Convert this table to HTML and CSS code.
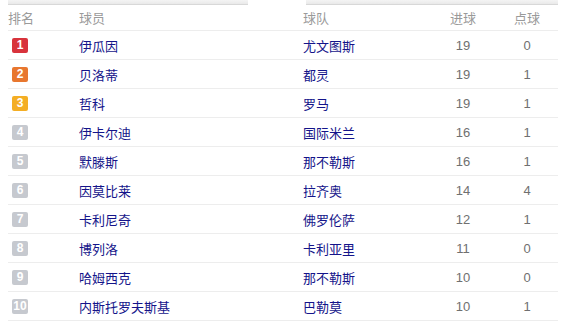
FILE: index.html
```html
<!DOCTYPE html>
<html lang="zh">
<head>
<meta charset="utf-8">
<link rel="stylesheet" href="styles.css">
</head>
<body>
<div class="tabs">
  <div class="tab tab-left"></div>
  <div class="tab tab-right"></div>
</div>
<table class="rank">
  <colgroup>
    <col class="c-rank"><col class="c-player"><col class="c-team"><col class="c-goal"><col class="c-pen">
  </colgroup>
  <thead>
    <tr><th>排名</th><th>球员</th><th>球队</th><th class="num">进球</th><th class="num">点球</th></tr>
  </thead>
  <tbody>
    <tr><td><span class="badge b1">1</span></td><td class="name">伊瓜因</td><td class="name">尤文图斯</td><td class="num">19</td><td class="num">0</td></tr>
    <tr><td><span class="badge b2">2</span></td><td class="name">贝洛蒂</td><td class="name">都灵</td><td class="num">19</td><td class="num">1</td></tr>
    <tr><td><span class="badge b3">3</span></td><td class="name">哲科</td><td class="name">罗马</td><td class="num">19</td><td class="num">1</td></tr>
    <tr><td><span class="badge">4</span></td><td class="name">伊卡尔迪</td><td class="name">国际米兰</td><td class="num">16</td><td class="num">1</td></tr>
    <tr><td><span class="badge">5</span></td><td class="name">默滕斯</td><td class="name">那不勒斯</td><td class="num">16</td><td class="num">1</td></tr>
    <tr><td><span class="badge">6</span></td><td class="name">因莫比莱</td><td class="name">拉齐奥</td><td class="num">14</td><td class="num">4</td></tr>
    <tr><td><span class="badge">7</span></td><td class="name">卡利尼奇</td><td class="name">佛罗伦萨</td><td class="num">12</td><td class="num">1</td></tr>
    <tr><td><span class="badge">8</span></td><td class="name">博列洛</td><td class="name">卡利亚里</td><td class="num">11</td><td class="num">0</td></tr>
    <tr><td><span class="badge">9</span></td><td class="name">哈姆西克</td><td class="name">那不勒斯</td><td class="num">10</td><td class="num">0</td></tr>
    <tr><td><span class="badge">10</span></td><td class="name">内斯托罗夫斯基</td><td class="name">巴勒莫</td><td class="num">10</td><td class="num">1</td></tr>
  </tbody>
</table>
</body>
</html>
```
FILE: styles.css
```css
html, body {
  margin: 0;
  padding: 0;
  background: #fff;
}
body {
  padding: 0 18px 0 8px;
  font-family: "Noto Sans CJK SC", "Liberation Sans", sans-serif;
  font-size: 13px;
}
.tabs {
  display: flex;
  justify-content: space-between;
  width: 550px;
}
.tab {
  height: 4px;
  background: linear-gradient(#f4f4f4, #e9e9e9);
  border-bottom: 1px solid #d8d8d8;
}
.tab-left { width: 240px; }
.tab-right { width: 252px; }
.rank {
  width: 550px;
  border-collapse: collapse;
  table-layout: fixed;
}
.c-rank { width: 71px; }
.c-player { width: 224px; }
.c-team { width: 127px; }
.c-goal { width: 66px; }
.c-pen { width: 62px; }
.rank th {
  height: 25px;
  padding: 0;
  text-align: left;
  font-weight: normal;
  color: #9a9a9a;
  border-bottom: 1px solid #ededed;
  line-height: 1;
}
.rank td {
  height: 28px;
  padding: 0;
  border-bottom: 1px solid #ededed;
  line-height: 1;
}
.rank td:first-child { padding-left: 4px; }
.rank .num {
  text-align: center;
  color: #707070;
  font-family: "Liberation Sans", sans-serif;
  font-size: 13px;
}
.rank th.num {
  font-family: "Noto Sans CJK SC", sans-serif;
  font-size: 13px;
  color: #9a9a9a;
}
.name { color: #14148a; }
.badge {
  display: inline-flex;
  align-items: center;
  justify-content: center;
  width: 16px;
  height: 15px;
  border-radius: 2px;
  background: #c6c9cf;
  color: #fff;
  font-family: "Liberation Sans", sans-serif;
  font-size: 12px;
  font-weight: bold;
  vertical-align: middle;
}
.b1 { background: #d8333c; }
.b2 { background: #e8772f; }
.b3 { background: #f4ae24; }
```
